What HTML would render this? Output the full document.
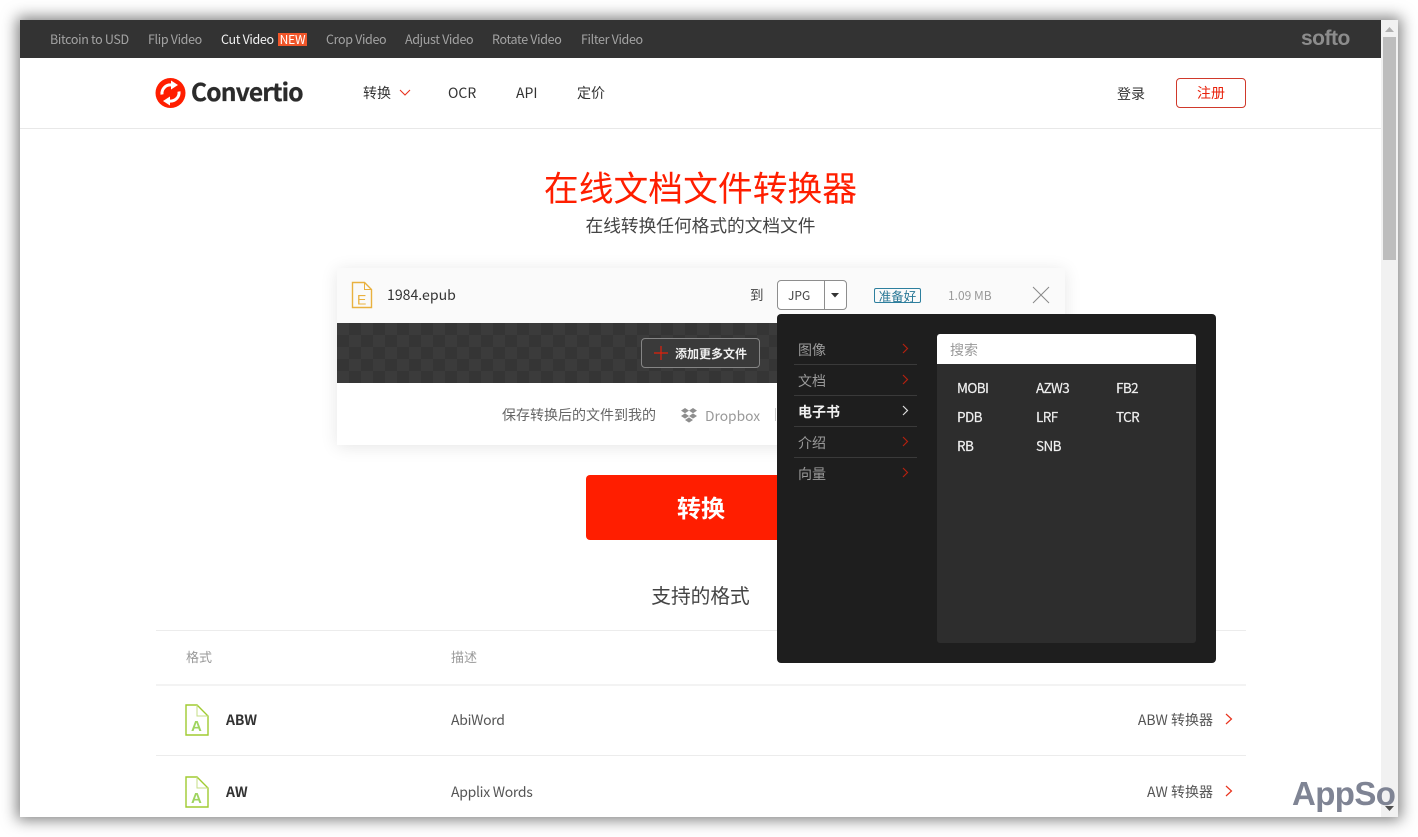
<!DOCTYPE html>
<html lang="zh"><head><meta charset="utf-8"><title>Convertio</title>
<style>
html,body{margin:0;padding:0;width:1418px;height:837px;overflow:hidden;background:#fff}
*{box-sizing:border-box}
body{font-family:"Noto Sans CJK SC","Liberation Sans",sans-serif;color:#333}
.a{position:absolute;white-space:nowrap;line-height:1}
#win{position:absolute;left:20px;top:20px;width:1378px;height:797px;background:#fff;box-shadow:0 0 14px 3px rgba(0,0,0,.5);overflow:hidden}
#in{position:absolute;left:-20px;top:-20px;width:1418px;height:837px}
.tb{font-size:12.5px;color:#a3a3a3;top:33px;letter-spacing:-.34px}
.nav{font-size:14px;color:#333;top:86px}
.m{font-size:14px;color:#9a9a9a;left:798px}
.l{position:absolute;left:794px;width:123px;height:1px;background:#3a3a3a}
.f{font-size:13.5px;color:#eee;letter-spacing:-.6px;-webkit-text-stroke:.2px #eee}
</style></head><body>
<div id="win"><div id="in">
<div class="a" style="left:20px;top:20px;width:1361px;height:38px;background:#333"></div>
<div class="a tb" style="left:50px">Bitcoin to USD</div>
<div class="a tb" style="left:148px">Flip Video</div>
<div class="a tb" style="left:221px;color:#f2f2f2">Cut Video</div>
<div class="a" style="left:278px;top:33px;width:29px;height:13px;background:#f0562a;color:#fff;font-size:12px;line-height:14px;text-align:center;letter-spacing:-.2px">NEW</div>
<div class="a tb" style="left:326px">Crop Video</div>
<div class="a tb" style="left:405px">Adjust Video</div>
<div class="a tb" style="left:492px">Rotate Video</div>
<div class="a tb" style="left:581px">Filter Video</div>
<div class="a" style="left:1301px;top:26px;font-family:'Liberation Sans',sans-serif;font-weight:700;font-size:21px;line-height:26px;color:#8c8c8c;letter-spacing:-.5px">softo</div>

<div class="a" style="left:20px;top:128px;width:1361px;height:1px;background:#e8e8e8"></div>
<svg class="a" style="left:155px;top:78px" width="31" height="30" viewBox="0 0 31 30"><circle cx="15.500" cy="15" r="15" fill="#ff1e00"/><path d="M7 16.500a8.500 8.500 0 0 1 9.500-9.500" fill="none" stroke="#fff" stroke-width="3"/><path d="M16 2.500l7 4.500-7 4.500z" fill="#fff"/><path d="M24 13.500a8.500 8.500 0 0 1-9.500 9.500" fill="none" stroke="#fff" stroke-width="3"/><path d="M15 27.500l-7-4.500 7-4.500z" fill="#fff"/></svg>
<div class="a" style="left:191px;top:77px;font-size:24.500px;line-height:30px;font-weight:700;color:#2b2b2b;letter-spacing:-.8px;-webkit-text-stroke:.3px #2b2b2b">Convertio</div>
<div class="a nav" style="left:363px">转换</div>
<svg class="a" style="left:399px;top:89px" width="12" height="8"><path d="M1 1l5 5 5-5" fill="none" stroke="#e8321c" stroke-width="1.100"/></svg>
<div class="a nav" style="left:448px">OCR</div>
<div class="a nav" style="left:516px">API</div>
<div class="a nav" style="left:577px">定价</div>
<div class="a nav" style="left:1117px;top:87px">登录</div>
<div class="a" style="left:1176px;top:78px;width:70px;height:30px;border:1px solid #d0392b;border-radius:4px;color:#e8200a;font-size:14px;line-height:29px;text-align:center">注册</div>

<div class="a" style="left:20px;width:1361px;top:165px;text-align:center;font-size:34.800px;line-height:44px;color:#ff1e00">在线文档文件转换器</div>
<div class="a" style="left:20px;width:1361px;top:214px;text-align:center;font-size:17.700px;line-height:22px;color:#444">在线转换任何格式的文档文件</div>

<div class="a" style="left:337px;top:268px;width:728px;height:177px;background:#fff;box-shadow:0 2px 16px rgba(0,0,0,.1)"></div>
<div class="a" style="left:337px;top:268px;width:728px;height:55px;background:#fafafa"></div>
<svg class="a" style="left:351px;top:281px" width="22" height="28" viewBox="0 0 22 28"><path d="M1.500 1.500h12l7 7v18h-19z" fill="none" stroke="#e9b13f" stroke-width="1.400"/><path d="M13.500 1.500v7h7" fill="none" stroke="#e9b13f" stroke-width="1"/><text x="6" y="23.500" font-size="14" fill="#e9b13f" font-family="Liberation Sans">E</text></svg>
<div class="a" style="left:387px;top:285px;font-size:14.100px;line-height:20px;color:#333">1984.epub</div>
<div class="a" style="left:750px;top:286px;font-size:13.500px;line-height:16px;color:#444">到</div>
<div class="a" style="left:777px;top:280px;width:70px;height:30px;border:1px solid #8e8e8e;border-radius:4px;background:#fff"></div>
<div class="a" style="left:824px;top:280px;width:1px;height:30px;background:#8e8e8e"></div>
<div class="a" style="left:788px;top:288px;font-size:12px;line-height:15px;color:#444">JPG</div>
<svg class="a" style="left:831px;top:293px" width="10" height="6"><path d="M0 0h8l-4 4.500z" fill="#333"/></svg>
<div class="a" style="left:874px;top:288px;width:47px;height:15px;border:1px solid #2d7f9e;border-radius:2px;color:#2a7896;font-size:12.500px;line-height:13px;text-align:center">准备好</div>
<div class="a" style="left:948px;top:289px;font-size:12px;line-height:14px;color:#999">1.09 MB</div>
<svg class="a" style="left:1032px;top:286px" width="18" height="18"><path d="M1 1l16 16M17 1L1 17" stroke="#888" stroke-width="1" fill="none"/></svg>

<div class="a" style="left:337px;top:323px;width:728px;height:60px;background:#353535"></div>
<svg class="a" style="left:337px;top:323px" width="440" height="60"><defs><pattern id="c" width="24" height="24" patternUnits="userSpaceOnUse"><rect x="0" y="0" width="12" height="12" fill="#3b3b3b"/><rect x="12" y="12" width="12" height="12" fill="#3b3b3b"/></pattern></defs><rect width="440" height="60" fill="url(#c)"/></svg>
<div class="a" style="left:641px;top:338px;width:119px;height:30px;border:1px solid #858585;border-radius:4px;background:#3a3a3a"></div>
<svg class="a" style="left:654px;top:346px" width="14" height="14"><path d="M7 0v14M0 7h14" stroke="#e0200b" stroke-width="1.200"/></svg>
<div class="a" style="left:675px;top:347px;font-size:12px;line-height:14px;font-weight:700;color:#f0f0f0">添加更多文件</div>
<div class="a" style="left:502px;top:407px;font-size:14px;line-height:17px;color:#666">保存转换后的文件到我的</div>
<svg class="a" style="left:681px;top:408px" width="16" height="15" viewBox="0 0 16 15"><path d="M4 0l4 2.600-4 2.600-4-2.600zM12 0l4 2.600-4 2.600-4-2.600zM4 5.400l4 2.600-4 2.600-4-2.600zM12 5.400l4 2.600-4 2.600-4-2.600zM8 9.400l4 2.600-4 2.600-4-2.600z" fill="#8e8e8e"/></svg>
<div class="a" style="left:705px;top:406px;font-size:13.800px;line-height:18px;color:#999">Dropbox</div>
<div class="a" style="left:775px;top:408px;width:1px;height:13px;background:#ccc"></div>

<div class="a" style="left:586px;top:475px;width:230px;height:65px;background:#ff1e00;border-radius:4px;color:#fff;font-size:24px;font-weight:700;line-height:63px;text-align:center">转换</div>

<div class="a" style="left:20px;width:1361px;top:582px;text-align:center;font-size:19.700px;line-height:26px;color:#444">支持的格式</div>
<div class="a" style="left:156px;top:630px;width:1090px;height:1px;background:#ececec"></div>
<div class="a" style="left:186px;top:649px;font-size:13px;line-height:15px;color:#999">格式</div>
<div class="a" style="left:451px;top:649px;font-size:13px;line-height:15px;color:#999">描述</div>
<div class="a" style="left:156px;top:684px;width:1090px;height:2px;background:#f3f3f3"></div>
<div class="a" style="left:156px;top:755px;width:1090px;height:1px;background:#ececec"></div>

<svg class="a" style="left:185px;top:704px" width="24" height="32" viewBox="0 0 24 32"><path d="M1 1h11l11 11v19H1z" fill="none" stroke="#a0cb30" stroke-width="1.400"/><path d="M12 1v11h11" fill="none" stroke="#c5de85" stroke-width="1"/><text x="6" y="27" font-size="15" font-weight="700" fill="#9fd45f" font-family="Liberation Sans">A</text></svg>
<div class="a" style="left:226px;top:712px;font-size:14px;line-height:17px;font-weight:700;color:#333;letter-spacing:-.1px">ABW</div>
<div class="a" style="left:451px;top:712px;font-size:14px;line-height:17px;color:#555;letter-spacing:-.3px">AbiWord</div>
<div class="a" style="left:1013px;width:200px;text-align:right;top:712px;font-size:14px;line-height:17px;color:#555">ABW 转换器</div>
<svg class="a" style="left:1225px;top:713px" width="8" height="12"><path d="M1 1l5.500 5-5.500 5" fill="none" stroke="#e8321c" stroke-width="1.200"/></svg>

<svg class="a" style="left:185px;top:776px" width="24" height="32" viewBox="0 0 24 32"><path d="M1 1h11l11 11v19H1z" fill="none" stroke="#a0cb30" stroke-width="1.400"/><path d="M12 1v11h11" fill="none" stroke="#c5de85" stroke-width="1"/><text x="6" y="27" font-size="15" font-weight="700" fill="#9fd45f" font-family="Liberation Sans">A</text></svg>
<div class="a" style="left:226px;top:784px;font-size:14px;line-height:17px;font-weight:700;color:#333;letter-spacing:-.1px">AW</div>
<div class="a" style="left:451px;top:784px;font-size:14px;line-height:17px;color:#555;letter-spacing:-.3px">Applix Words</div>
<div class="a" style="left:1013px;width:200px;text-align:right;top:784px;font-size:14px;line-height:17px;color:#555">AW 转换器</div>
<svg class="a" style="left:1225px;top:785px" width="8" height="12"><path d="M1 1l5.500 5-5.500 5" fill="none" stroke="#e8321c" stroke-width="1.200"/></svg>

<div class="a" style="left:777px;top:314px;width:439px;height:349px;background:#1e1e1e;border-radius:4px"></div>
<div class="a m" style="top:343px">图像</div>
<div class="l" style="top:364px"></div>
<div class="a m" style="top:374px">文档</div>
<div class="l" style="top:395px"></div>
<div class="a m" style="top:405px;color:#f0f0f0;font-weight:700">电子书</div>
<div class="l" style="top:426px"></div>
<div class="a m" style="top:436px">介绍</div>
<div class="l" style="top:457px"></div>
<div class="a m" style="top:467px">向量</div>
<svg class="a" style="left:902px;top:343px" width="7" height="11"><path d="M1 1l4.500 4.500L1 10" fill="none" stroke="#b3200f" stroke-width="1.200"/></svg>
<svg class="a" style="left:902px;top:374px" width="7" height="11"><path d="M1 1l4.500 4.500L1 10" fill="none" stroke="#b3200f" stroke-width="1.200"/></svg>
<svg class="a" style="left:902px;top:405px" width="7" height="11"><path d="M1 1l4.500 4.500L1 10" fill="none" stroke="#ddd" stroke-width="1.200"/></svg>
<svg class="a" style="left:902px;top:436px" width="7" height="11"><path d="M1 1l4.500 4.500L1 10" fill="none" stroke="#b3200f" stroke-width="1.200"/></svg>
<svg class="a" style="left:902px;top:467px" width="7" height="11"><path d="M1 1l4.500 4.500L1 10" fill="none" stroke="#b3200f" stroke-width="1.200"/></svg>
<div class="a" style="left:937px;top:334px;width:259px;height:309px;background:#2d2d2d;border-radius:3px"></div>
<div class="a" style="left:937px;top:334px;width:259px;height:30px;background:#fff;border-radius:3px 3px 0 0;color:#999;font-size:14px;line-height:32px;padding-left:13px">搜索</div>
<div class="a f" style="left:957px;top:381px">MOBI</div>
<div class="a f" style="left:1036px;top:381px">AZW3</div>
<div class="a f" style="left:1116px;top:381px">FB2</div>
<div class="a f" style="left:957px;top:410px">PDB</div>
<div class="a f" style="left:1036px;top:410px">LRF</div>
<div class="a f" style="left:1116px;top:410px">TCR</div>
<div class="a f" style="left:957px;top:439px">RB</div>
<div class="a f" style="left:1036px;top:439px">SNB</div>

<div class="a" style="left:1381px;top:20px;width:17px;height:797px;background:#f1f1f1"></div>
<div class="a" style="left:1383px;top:37px;width:13px;height:223px;background:#bdbdbd"></div>
<svg class="a" style="left:1385px;top:27px" width="9" height="6"><path d="M4.500 0l4.500 5H0z" fill="#b0b0b0"/></svg>
<svg class="a" style="left:1385px;top:806px" width="9" height="6"><path d="M0 0h9L4.500 5z" fill="#505050"/></svg>
</div></div>
<div class="a" style="left:1292px;top:772px;font-family:'Liberation Sans',sans-serif;font-weight:700;font-size:33px;line-height:44px;color:#7f8494;letter-spacing:-.6px">AppSo</div>
</body></html>
